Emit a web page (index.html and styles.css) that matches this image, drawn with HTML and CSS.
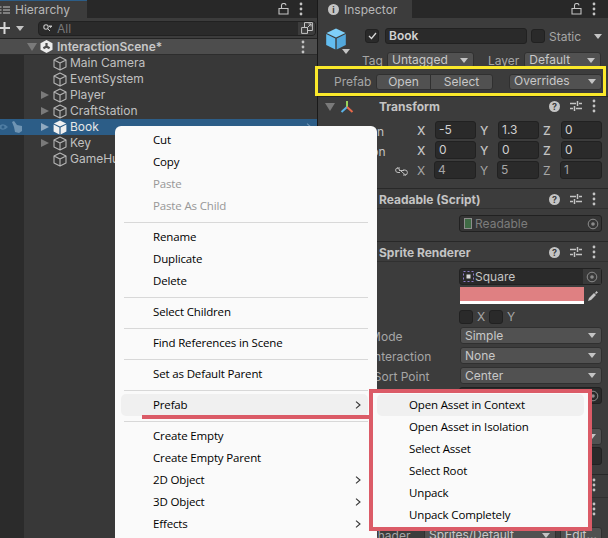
FILE: index.html
```html
<!doctype html>
<html lang="en">
<head>
	<meta charset="UTF-8">
	<title>Prefab menu</title>
	<link rel="stylesheet" href="styles.css">
</head>
<body>
	<svg class="defs" width="0" height="0">
		<symbol id="cube" viewBox="0 0 14 15">
			<path d="M7 1 L13 4 V11 L7 14 L1 11 V4 Z M1 4 L7 7 L13 4 M7 7 V14" fill="none" stroke="currentColor" stroke-width="1.1" stroke-linejoin="round"/>
		</symbol>
		<symbol id="cube-solid" viewBox="0 0 14 15">
			<path d="M7 .6 L13.2 3.6 L7 6.6 L.8 3.6 Z M.6 4.6 L6.4 7.5 V14.4 L.6 11.4 Z M13.4 4.6 L7.6 7.5 V14.4 L13.4 11.4 Z" fill="currentColor"/>
		</symbol>
		<symbol id="dots" viewBox="0 0 4 14">
			<circle cx="2" cy="2" r="1.4" fill="currentColor"/><circle cx="2" cy="7" r="1.4" fill="currentColor"/><circle cx="2" cy="12" r="1.4" fill="currentColor"/>
		</symbol>
		<symbol id="lock" viewBox="0 0 12 12">
			<path d="M1 5.5 H10 V11 H1 Z M3.5 5.5 V3 A2.2 2.2 0 0 1 8 2.4" fill="none" stroke="currentColor" stroke-width="1.1"/>
		</symbol>
		<symbol id="sliders" viewBox="0 0 12 12">
			<path d="M0 3.5 H6 M9 3.5 H12 M7.5 1 V6 M0 8.5 H3 M6 8.5 H12 M4.5 6 V11" fill="none" stroke="currentColor" stroke-width="1.5"/>
		</symbol>
		<symbol id="target" viewBox="0 0 12 12">
			<circle cx="6" cy="6" r="4.8" fill="none" stroke="currentColor" stroke-width="1"/><circle cx="6" cy="6" r="1.8" fill="currentColor"/>
		</symbol>
		<symbol id="chevron" viewBox="0 0 6 8">
			<path d="M1 .6 L5 4 L1 7.4" fill="none" stroke="currentColor" stroke-width="1.1"/>
		</symbol>
	</svg>

	<div id="editor">
		<section class="hierarchy">
			<div class="tabbar">
				<div class="tab tab-hier">
					<svg class="tab-list" width="10" height="10" viewBox="0 0 10 10"><path d="M0 2 H1.5 M3 2 H10 M0 5 H1.5 M3 5 H10 M0 8 H1.5 M3 8 H10" stroke="#c4c4c4" stroke-width="1.2"/></svg>
					<span>Hierarchy</span>
				</div>
				<div class="tab-tools">
					<svg class="ic-lock"><use href="#lock"/></svg>
					<svg class="ic-dots"><use href="#dots"/></svg>
				</div>
			</div>
			<div class="toolbar">
				<svg class="plus" width="12" height="12" viewBox="0 0 12 12"><path d="M0 6 H11 M5.5 0 V12" stroke="#d8d8d8" stroke-width="2"/></svg>
				<i class="arrow-down"></i>
				<div class="search">
					<svg class="search-ic" width="9" height="8" viewBox="0 0 9 8"><circle cx="3" cy="3" r="2.2" fill="none" stroke="#c4c4c4" stroke-width="1.1"/><path d="M4.6 4.6 L7 7 M6 2 H9 L7.5 3.6 Z" stroke="#c4c4c4" fill="#c4c4c4"/></svg>
					<span class="search-text">All</span>
					<div class="search-btn">
						<svg width="12" height="12" viewBox="0 0 12 12"><path d="M.6 5.5 H6.5 V11.4 H.6 Z M3.5 5 V.6 H11.4 V8.5 H7 M6.5 5.5 L10 2 M7.5 2 H10 V4.5" fill="none" stroke="#c4c4c4"/></svg>
					</div>
				</div>
			</div>
			<div class="scene-head">
				<i class="arrow-open"></i>
				<svg class="scene-ic" width="13" height="13" viewBox="0 0 13 13"><path d="M6.5 0 L12.500 3.200 V9.800 L6.500 13 L.5 9.800 V3.200 Z" fill="#ececec"/><path d="M6.5 6.5 V3 M6.5 6.5 L3.400 8.300 M6.5 6.5 L9.600 8.300" stroke="#4d4d4d" stroke-width="2.200"/></svg>
				<span>InteractionScene*</span>
				<svg class="ic-dots scene-dots"><use href="#dots"/></svg>
			</div>
			<div class="tree">
				<div class="row"><svg class="cube"><use href="#cube"/></svg><span>Main Camera</span></div>
				<div class="row"><svg class="cube"><use href="#cube"/></svg><span>EventSystem</span></div>
				<div class="row has-kids"><svg class="cube"><use href="#cube"/></svg><span>Player</span></div>
				<div class="row has-kids"><svg class="cube"><use href="#cube"/></svg><span>CraftStation</span></div>
				<div class="row has-kids selected">
					<svg class="row-eye" width="10" height="8" viewBox="0 0 10 8"><path d="M0 4 Q5 -1.500 10 4 Q5 9.500 0 4 Z" fill="#4f7da3"/><circle cx="5" cy="4" r="1.500" fill="#2c5d87"/></svg>
					<svg class="row-hand" width="12" height="12" viewBox="0 0 12 12"><path d="M1 1 L3 0 L6 4 L11 5 L11 10 L8 12 L4 11 L3 6 Z" fill="#6f94b3"/></svg>
					<svg class="cube cube-white"><use href="#cube-solid"/></svg><span>Book</span>
					<svg class="row-chev"><use href="#chevron"/></svg>
				</div>
				<div class="row has-kids"><svg class="cube"><use href="#cube"/></svg><span>Key</span></div>
				<div class="row"><svg class="cube"><use href="#cube"/></svg><span>GameHud</span></div>
			</div>
		</section>

		<section class="inspector">
			<div class="tabbar">
				<div class="tab tab-insp">
					<span class="info-ic">i</span>
					<span>Inspector</span>
				</div>
				<div class="tab-tools">
					<svg class="ic-lock"><use href="#lock"/></svg>
					<svg class="ic-dots"><use href="#dots"/></svg>
				</div>
			</div>

			<div class="obj-head">
				<div class="obj-top">
					<svg class="obj-cube" width="20" height="22" viewBox="0 0 20 22">
						<path d="M10 .5 L19.500 5 L10 9.500 L.5 5 Z" fill="#7fd0fa"/>
						<path d="M.2 6 L9.300 10.500 V21.600 L.2 17 Z" fill="#63bdf0"/>
						<path d="M19.800 6 L10.700 10.500 V21.600 L19.800 17 Z" fill="#53a8dc"/>
					</svg>
					<i class="arrow-down obj-arrow"></i>
					<div class="check"><svg width="9" height="8" viewBox="0 0 9 8"><path d="M1 4 L3.500 6.500 L8 1" fill="none" stroke="#d8d8d8" stroke-width="1.3"/></svg></div>
					<div class="name-field">Book</div>
					<div class="check check-static"></div>
					<span class="dim static-label">Static</span>
					<i class="arrow-down static-arrow"></i>
				</div>
				<div class="obj-tags">
					<span class="dim tag-label">Tag</span>
					<div class="drop tag-drop">Untagged<i class="arrow-down"></i></div>
					<span class="dim layer-label">Layer</span>
					<div class="drop layer-drop">Default<i class="arrow-down"></i></div>
				</div>
				<div class="obj-prefab">
					<span class="dim prefab-label">Prefab</span>
					<div class="btn btn-open">Open</div>
					<div class="btn btn-select">Select</div>
					<div class="drop over-drop">Overrides<i class="arrow-down"></i></div>
				</div>
			</div>

			<div class="comp comp-transform">
				<div class="comp-head">
					<i class="arrow-open comp-arrow"></i>
					<svg class="axes" width="14" height="14" viewBox="0 0 14 14"><path d="M7 7 V1" stroke="#9ad45a" stroke-width="2"/><path d="M7 7 L1.500 12" stroke="#5ab3e8" stroke-width="2"/><path d="M7 7 L12.500 12" stroke="#e8694a" stroke-width="2"/></svg>
					<span class="comp-title">Transform</span>
					<div class="comp-tools"><b class="help">?</b><svg class="ic-sliders"><use href="#sliders"/></svg><svg class="ic-dots"><use href="#dots"/></svg></div>
				</div>
				<div class="vec">
					<span class="vec-label">Position</span>
					<div class="axis"><label>X</label><div class="num">-5</div></div>
					<div class="axis"><label>Y</label><div class="num">1.3</div></div>
					<div class="axis"><label>Z</label><div class="num">0</div></div>
				</div>
				<div class="vec">
					<span class="vec-label">Rotation</span>
					<div class="axis"><label>X</label><div class="num">0</div></div>
					<div class="axis"><label>Y</label><div class="num">0</div></div>
					<div class="axis"><label>Z</label><div class="num">0</div></div>
				</div>
				<div class="vec vec-dim">
					<span class="vec-label">Scale
						<svg class="link-ic" width="13" height="9" viewBox="0 0 13 9"><path d="M5 1 H3 Q.6 1 .6 3 Q.6 5.500 3 5.500 H5 M8 3 H10 Q12.400 3 12.400 5.500 Q12.400 8 10 8 H8 M4 3.500 H9 M2 .5 L11 8.500" fill="none" stroke="#bdbdbd"/></svg>
					</span>
					<div class="axis"><label>X</label><div class="num">4</div></div>
					<div class="axis"><label>Y</label><div class="num">5</div></div>
					<div class="axis"><label>Z</label><div class="num">1</div></div>
				</div>
			</div>

			<div class="comp comp-readable">
				<div class="comp-head comp-head-line">
					<span class="comp-title">Readable (Script)</span>
					<div class="comp-tools"><b class="help">?</b><svg class="ic-sliders"><use href="#sliders"/></svg><svg class="ic-dots"><use href="#dots"/></svg></div>
				</div>
				<div class="prop">
					<div class="obj-field field-dim"><i class="script-ic"></i>Readable<svg class="ic-target"><use href="#target"/></svg></div>
				</div>
			</div>

			<div class="comp comp-sprite">
				<div class="comp-head comp-head-line">
					<span class="comp-title">Sprite Renderer</span>
					<div class="comp-tools"><b class="help">?</b><svg class="ic-sliders"><use href="#sliders"/></svg><svg class="ic-dots"><use href="#dots"/></svg></div>
				</div>
				<div class="prop prop-square">
					<div class="obj-field field-square"><svg class="square-ic" width="11" height="11" viewBox="0 0 11 11"><rect x=".5" y=".5" width="10" height="10" fill="none" stroke="#8b7bc8" stroke-dasharray="2 2"/><rect x="3.500" y="3.500" width="4" height="4" fill="#d8d8d8"/></svg>Square<span class="target-box"><svg class="ic-target"><use href="#target"/></svg></span></div>
				</div>
				<div class="prop prop-color">
					<div class="color-field">
						<div class="swatch"></div>
						<svg class="dropper" width="12" height="12" viewBox="0 0 12 12"><path d="M1 11 L2 8 L7 3 L9 5 L4 10 Z M6.500 1.500 L8 3 L9.500 1 L11 2.500 L9 4 L10.500 5.500" fill="#c4c4c4"/></svg>
					</div>
				</div>
				<div class="prop prop-flip">
					<div class="check"></div><span class="dim flip-label">X</span>
					<div class="check"></div><span class="dim flip-label">Y</span>
				</div>
				<div class="prop prop-label"><span class="dim">Draw Mode</span><div class="drop wide-drop">Simple<i class="arrow-down"></i></div></div>
				<div class="prop prop-label"><span class="dim">Mask Interaction</span><div class="drop wide-drop">None<i class="arrow-down"></i></div></div>
				<div class="prop prop-label"><span class="dim">Sprite Sort Point</span><div class="drop wide-drop">Center<i class="arrow-down"></i></div></div>
				<div class="prop"><div class="obj-field"><svg class="ic-target"><use href="#target"/></svg></div></div>
				<div class="prop prop-gap"><div class="drop wide-drop"><i class="arrow-down"></i></div></div>
				<div class="prop"><div class="obj-field obj-field-tall"></div></div>
			</div>

			<div class="comp comp-material">
				<div class="comp-head comp-head-line head-first">
					<div class="comp-tools"><svg class="ic-dots"><use href="#dots"/></svg></div>
				</div>
				<div class="comp-head head-second">
					<div class="comp-tools"><svg class="ic-dots"><use href="#dots"/></svg></div>
				</div>
				<div class="shader-row">
					<span class="dim">Shader</span>
					<div class="drop shader-drop">Sprites/Default<i class="arrow-down"></i></div>
					<div class="btn edit-btn">Edit...</div>
				</div>
			</div>
		</section>
	</div>

	<!-- things drawn on top of the editor -->
	<div class="highlight-yellow"></div>

	<ul class="menu main-menu">
		<li>Cut</li>
		<li>Copy</li>
		<li class="off">Paste</li>
		<li class="off">Paste As Child</li>
		<li class="sep"></li>
		<li>Rename</li>
		<li>Duplicate</li>
		<li>Delete</li>
		<li class="sep"></li>
		<li>Select Children</li>
		<li class="sep"></li>
		<li>Find References in Scene</li>
		<li class="sep"></li>
		<li>Set as Default Parent</li>
		<li class="sep"></li>
		<li class="hover">Prefab<svg class="menu-chev"><use href="#chevron"/></svg></li>
		<li class="sep"></li>
		<li>Create Empty</li>
		<li>Create Empty Parent</li>
		<li>2D Object<svg class="menu-chev"><use href="#chevron"/></svg></li>
		<li>3D Object<svg class="menu-chev"><use href="#chevron"/></svg></li>
		<li>Effects<svg class="menu-chev"><use href="#chevron"/></svg></li>
	</ul>

	<ul class="menu sub-menu">
		<li class="hover">Open Asset in Context</li>
		<li>Open Asset in Isolation</li>
		<li>Select Asset</li>
		<li>Select Root</li>
		<li>Unpack</li>
		<li>Unpack Completely</li>
	</ul>
	<div class="red-line"></div>
</body>
</html>
```

FILE: styles.css
```css
*{
	margin: 0;
	padding: 0;
	box-sizing: border-box;
}

html, body{
	width: 608px;
	height: 538px;
	overflow: hidden;
}

body{
	position: relative;
	background-color: #191919;
	font-family: Inter, "Liberation Sans", sans-serif;
	font-size: 12px;
	color: #c4c4c4;
}

li{
	list-style: none;
}

i{
	display: block;
}

.defs{
	position: absolute;
}

#editor{
	display: flex;
	height: 538px;
}

/* shared bits */
.arrow-down{
	width: 0;
	height: 0;
	border-left: 4px solid transparent;
	border-right: 4px solid transparent;
	border-top: 5px solid #c4c4c4;
}

.arrow-open{
	width: 0;
	height: 0;
	border-left: 5px solid transparent;
	border-right: 5px solid transparent;
	border-top: 8px solid #7a7a7a;
}

.ic-dots{
	width: 4px;
	height: 14px;
	color: #c4c4c4;
}

.ic-lock{
	width: 12px;
	height: 12px;
	color: #c4c4c4;
}

.ic-sliders{
	width: 12px;
	height: 12px;
	color: #c4c4c4;
}

.ic-target{
	width: 12px;
	height: 12px;
	color: #8c8c8c;
	margin-left: auto;
}

.dim{
	color: #a6a6a6;
}

.tabbar{
	display: flex;
	align-items: center;
	height: 18px;
	background-color: #282828;
}

.tab{
	display: flex;
	align-items: center;
	height: 18px;
	background-color: #3c3c3c;
	color: #b8b8b8;
}

.tab-tools{
	display: flex;
	align-items: center;
	margin-left: auto;
}

/* hierarchy */
.hierarchy{
	width: 317px;
	height: 538px;
	margin-right: 1px;
	background: linear-gradient(to right, #2b2b2b 24px, #383838 24px);
}

.tab-hier{
	width: 87px;
	border-top: 1px solid #2c5d87;
}

.tab-list{
	margin-right: 5px;
}

.hierarchy .tab-tools{
	width: 28px;
	gap: 9px;
	margin-right: 11px;
}

.toolbar{
	display: flex;
	align-items: center;
	height: 21px;
	background-color: #3c3c3c;
	border-bottom: 1px solid #232323;
}

.plus{
	margin-left: -1px;
}

.toolbar .arrow-down{
	margin-left: 5px;
}

.search{
	display: flex;
	align-items: center;
	width: 278px;
	height: 15px;
	margin-left: 14px;
	background-color: #2a2a2a;
	border: 1px solid #212121;
	border-radius: 4px;
}

.search-ic{
	margin-left: 4px;
}

.search-text{
	margin-left: 5px;
	color: #787878;
}

.search-btn{
	display: flex;
	align-items: center;
	justify-content: center;
	width: 17px;
	height: 13px;
	margin-left: auto;
	background-color: #3c3c3c;
	border-radius: 0 3px 3px 0;
}

.scene-head{
	display: flex;
	align-items: center;
	height: 16px;
	padding-left: 27px;
	background-color: #4d4d4d;
	border-bottom: 1px solid #2d2d2d;
	font-weight: 600;
	color: #c8c8c8;
}

.scene-head .arrow-open{
	margin-right: 3px;
}

.scene-ic{
	margin-right: 4px;
}

.scene-dots{
	margin-left: auto;
	margin-right: 12px;
}

.row{
	position: relative;
	display: flex;
	align-items: center;
	height: 16px;
	padding-left: 53px;
	color: #c0c0c0;
}

.row span{
	margin-bottom: 2px;
}

.has-kids::before{
	content: "";
	position: absolute;
	left: 41px;
	top: 4px;
	border-top: 4px solid transparent;
	border-bottom: 4px solid transparent;
	border-left: 8px solid #7a7a7a;
}

.cube{
	width: 14px;
	height: 15px;
	margin-right: 3px;
	color: #b5b5b5;
}

.cube-white{
	color: #f0f0f0;
}

.selected{
	background-color: #2c5d87;
	color: #e6e6e6;
}

.selected::before{
	border-left-color: #8fa9c0;
}

.row-eye{
	position: absolute;
	left: -2px;
	top: 4px;
}

.row-hand{
	position: absolute;
	left: 11px;
	top: 2px;
}

.row-chev{
	position: absolute;
	right: 5px;
	top: 4px;
	width: 6px;
	height: 8px;
	color: #6f94b3;
}

/* inspector */
.inspector{
	flex: 1;
	height: 538px;
	background-color: #3c3c3c;
}

.tab-insp{
	width: 94px;
	padding-left: 10px;
}

.info-ic{
	width: 11px;
	height: 11px;
	margin-right: 5px;
	border-radius: 50%;
	background-color: #c4c4c4;
	color: #3c3c3c;
	font-size: 9px;
	font-weight: 700;
	line-height: 11px;
	text-align: center;
}

.inspector .tab-tools{
	gap: 9px;
	margin-right: 12px;
}

.obj-head{
	position: relative;
	height: 79px;
	padding-top: 10px;
	border-bottom: 1px solid #282828;
}

.obj-top{
	display: flex;
	align-items: center;
	height: 16px;
	padding-left: 47px;
}

.obj-cube{
	position: absolute;
	left: 8px;
	top: 10px;
}

.obj-arrow{
	position: absolute;
	left: 24px;
	top: 31px;
}

.check{
	display: flex;
	align-items: center;
	justify-content: center;
	width: 14px;
	height: 14px;
	background-color: #2a2a2a;
	border: 1px solid #212121;
	border-radius: 3px;
}

.name-field{
	width: 142px;
	height: 16px;
	margin-left: 6px;
	padding-left: 3px;
	background-color: #2a2a2a;
	border: 1px solid #212121;
	border-radius: 3px;
	font-weight: 600;
	line-height: 14px;
	color: #d2d2d2;
}

.check-static{
	margin-left: 4px;
}

.static-label{
	margin-left: 4px;
}

.static-arrow{
	margin-left: 13px;
}

.drop{
	display: flex;
	align-items: center;
	justify-content: space-between;
	height: 16px;
	padding: 0 5px 0 4px;
	background-color: #515151;
	border: 1px solid #303030;
	border-radius: 3px;
	color: #c8c8c8;
	line-height: 14px;
}

.obj-tags{
	display: flex;
	align-items: center;
	height: 16px;
	margin-top: 8px;
	padding-left: 44px;
}

.tag-drop{
	width: 87px;
	margin-left: 4px;
}

.layer-label{
	margin-left: 14px;
}

.layer-drop{
	width: 77px;
	margin-left: 5px;
}

.obj-prefab{
	display: flex;
	align-items: center;
	height: 17px;
	margin-top: 5px;
	padding-left: 16px;
}

.prefab-label{
	width: 42px;
}

.btn{
	height: 16px;
	background-color: #515151;
	border: 1px solid #303030;
	color: #c8c8c8;
	text-align: center;
	line-height: 13px;
}

.btn-open{
	width: 55px;
	border-radius: 3px 0 0 3px;
}

.btn-select{
	width: 63px;
	margin-left: -1px;
	border-radius: 0 3px 3px 0;
}

.over-drop{
	width: 93px;
	margin-left: 16px;
	padding-bottom: 1px;
}

.comp{
	border-bottom: 1px solid #282828;
}

.comp-head{
	display: flex;
	align-items: center;
	position: relative;
	height: 20px;
	padding-left: 61px;
}

.comp-head-line{
	padding-top: 1px;
	border-bottom: 1px solid #303030;
}

.comp-title{
	font-weight: 700;
	color: #c4c4c4;
}

.comp-arrow{
	position: absolute;
	left: 7px;
	top: 6px;
}

.axes{
	position: absolute;
	left: 22px;
	top: 3px;
}

.comp-tools{
	display: flex;
	align-items: center;
	gap: 10px;
	margin-left: auto;
	margin-right: 12px;
}

.help{
	width: 11px;
	height: 11px;
	border-radius: 50%;
	background-color: #c4c4c4;
	color: #3c3c3c;
	font-size: 9px;
	line-height: 11px;
	text-align: center;
}

.comp-transform{
	height: 92px;
}

.comp-transform .comp-head{
	height: 18px;
	margin-bottom: 6px;
}

.vec{
	display: flex;
	align-items: center;
	gap: 8px;
	height: 18px;
	margin-bottom: 2px;
	padding: 0 6px 0 21px;
}

.vec-label{
	display: flex;
	align-items: center;
	justify-content: space-between;
	flex: 1;
	margin-top: 2px;
	padding-right: 5px;
}

.axis{
	display: flex;
	align-items: center;
	width: 55px;
}

.axis label{
	width: 18px;
	margin-left: -4px;
	font-weight: 500;
	color: #c4c4c4;
}

.num{
	flex: 1;
	height: 18px;
	padding-left: 3px;
	background-color: #2a2a2a;
	border: 1px solid #212121;
	border-radius: 3px;
	line-height: 16px;
	color: #d0d0d0;
}

.vec-dim label,
.vec-dim .num{
	font-weight: 400;
	color: #a6a6a6;
}

.vec-dim .num{
	margin-left: -1px;
}

.comp-readable{
	height: 53px;
}

.comp-readable .comp-head{
	margin-bottom: 6px;
}

.prop{
	display: flex;
	justify-content: flex-end;
	padding-right: 6px;
	margin-bottom: 3px;
}

.prop-square{
	margin-bottom: 2px;
}

.prop-color{
	margin-bottom: 5px;
}

.obj-field{
	display: flex;
	align-items: center;
	width: 143px;
	height: 17px;
	padding: 0 2px 0 4px;
	background-color: #2a2a2a;
	border: 1px solid #212121;
	border-radius: 3px;
	color: #c4c4c4;
}

.field-dim{
	background-color: #353535;
	color: #7c7c7c;
}

.field-square{
	padding: 0 0 0 3px;
}

.script-ic{
	width: 8px;
	height: 11px;
	margin-right: 3px;
	background-color: #3f6b45;
	border: 1px solid #8d8d8d;
}

.comp-sprite{
	padding-bottom: 6px;
}

.comp-sprite .comp-head{
	margin-bottom: 6px;
}

.square-ic{
	margin-right: 1px;
}

.target-box{
	display: flex;
	align-items: center;
	justify-content: center;
	width: 18px;
	height: 15px;
	margin-left: auto;
	background-color: #3a3a3a;
}

.target-box .ic-target{
	margin: 0;
}

.color-field{
	display: flex;
	align-items: center;
	width: 143px;
	height: 17px;
	padding-left: 1px;
	background-color: #3c3c3c;
	border-radius: 3px;
}

.swatch{
	width: 124px;
	height: 17px;
	background-color: #df8082;
	border-bottom: 3px solid #fff;
}

.dropper{
	margin-left: 3px;
}

.prop-flip{
	justify-content: flex-start;
	align-items: center;
	height: 15px;
	margin-bottom: 3px;
	padding-left: 141px;
}

.flip-label{
	width: 16px;
	padding-left: 4px;
}

.prop-label{
	align-items: center;
	justify-content: space-between;
	padding-left: 19px;
}

.prop-label .dim{
	margin-top: 2px;
}

.wide-drop{
	width: 142px;
	height: 17px;
}

.prop-gap{
	margin-top: 24px;
	margin-bottom: 2px;
}

.prop-gap .arrow-down{
	margin-left: auto;
}

.obj-field-tall{
	height: 18px;
}

.head-first{
	height: 23px;
	padding-top: 0;
	padding-bottom: 3px;
}

.head-second{
	height: 22px;
}

.shader-row{
	display: flex;
	align-items: center;
	gap: 4px;
	height: 18px;
	margin-top: 6px;
	padding: 0 6px 0 19px;
}

.shader-row .dim{
	flex: 1;
	padding-left: 33px;
}

.shader-drop{
	width: 132px;
}

.edit-btn{
	width: 42px;
	border-radius: 3px;
}

/* overlays */
.highlight-yellow{
	position: absolute;
	left: 315px;
	top: 66px;
	width: 291px;
	height: 30px;
	border: 3px solid #fbe92b;
}

.menu{
	position: absolute;
	background-color: #fafafa;
	font-family: "Open Sans", "Noto Sans", sans-serif;
	font-size: 11.5px;
	letter-spacing: -0.15px;
	color: #000;
}

.menu li{
	position: relative;
	display: flex;
	align-items: center;
	height: 22px;
	padding-bottom: 2px;
	border-radius: 5px;
}

.main-menu{
	left: 115px;
	top: 126px;
	width: 262px;
	height: 420px;
	padding: 3px 9px 0 6px;
	border-radius: 6px;
}

.main-menu li{
	padding-left: 32px;
}

.menu .sep{
	height: 1px;
	margin: 5px 0 3px 3px;
	padding: 0;
	background-color: #d8d8d8;
	border-radius: 0;
}

.menu .off{
	color: #979797;
}

.menu .hover{
	background-color: #f0f0f0;
}

.menu-chev{
	position: absolute;
	right: 7px;
	top: 7px;
	width: 6px;
	height: 8px;
	color: #333;
}

.sub-menu{
	left: 369px;
	top: 389px;
	width: 223px;
	height: 142px;
	padding: 1px 4px;
	border: 4px solid #db5b67;
}

.sub-menu li{
	padding-left: 32px;
}

.red-line{
	position: absolute;
	left: 142px;
	top: 415px;
	width: 228px;
	height: 4px;
	background-color: #db5b67;
}
```
